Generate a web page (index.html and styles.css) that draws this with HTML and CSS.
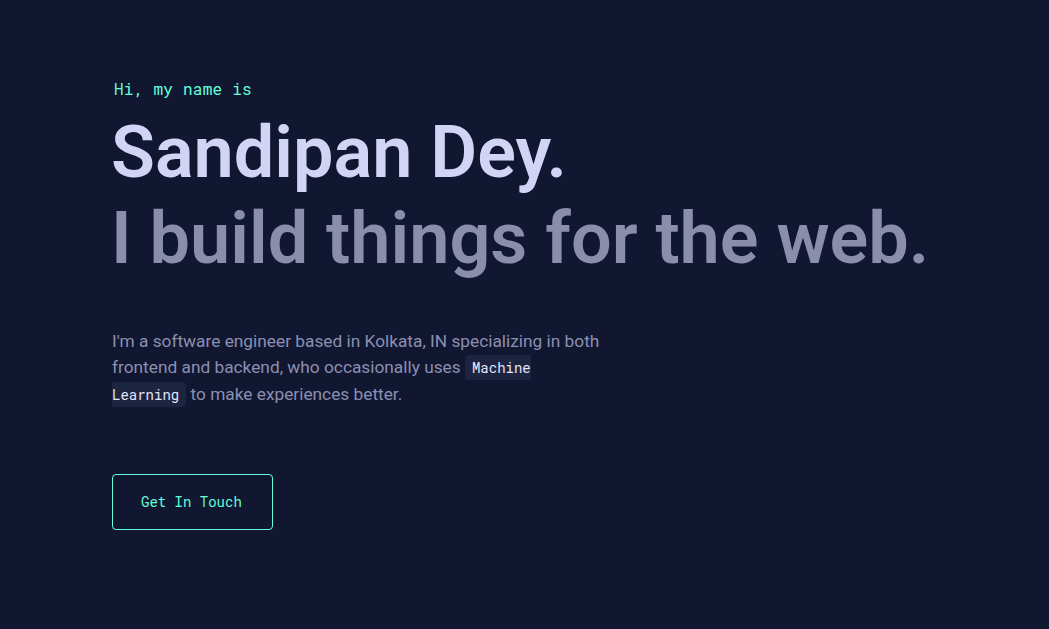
FILE: index.html
```html
<!DOCTYPE html>
<html lang="en">
<head>
<meta charset="utf-8">
<title>Sandipan Dey</title>
<link rel="stylesheet" href="styles.css">
</head>
<body>
<main class="hero">
  <p class="intro">Hi, my name is</p>
  <h1 class="name">Sandipan Dey.</h1>
  <h2 class="tagline">I build things for the web.</h2>
  <p class="bio">I'm a software engineer based in Kolkata, IN specializing in both frontend and backend, who occasionally uses <code class="chip">Machine Learning</code> to make experiences better.</p>
  <a class="cta" href="#contact">Get In Touch</a>
</main>
</body>
</html>
```
FILE: styles.css
```css
html, body {
  margin: 0;
  padding: 0;
  background: #111730;
}
body {
  min-height: 629px;
  font-family: Roboto, "Liberation Sans", sans-serif;
}
.hero {
  display: flex;
  flex-direction: column;
  align-items: flex-start;
  padding: 79px 0 0 112px;
}
.intro {
  margin: 0 0 14px 2px;
  font-family: "Roboto Mono", "DejaVu Sans Mono", monospace;
  font-size: 16px;
  line-height: 20px;
  letter-spacing: 0.25px;
  color: #64ffda;
}
.name,
.tagline {
  margin: 0 0 0 -1px;
  font-size: 72px;
  font-weight: 600;
  line-height: 80px;
}
.name {
  color: #d2d4f5;
}
.tagline {
  margin-top: 6px;
  color: #8a8dab;
}
.bio {
  margin: 49px 0 0;
  max-width: 495px;
  font-size: 17.3px;
  line-height: 26px;
  color: #8b8fb1;
}
.chip {
  font-family: "Roboto Mono", "DejaVu Sans Mono", monospace;
  font-size: 14px;
  padding: 3px 7px;
  border-radius: 4px;
  background: #1d2440;
  color: #e2e6fb;
}
.cta {
  margin-top: 66px;
  padding: 20px 30px 20px 28px;
  border: 1px solid #64ffda;
  border-radius: 4px;
  font-family: "Roboto Mono", "DejaVu Sans Mono", monospace;
  font-size: 14px;
  line-height: 14px;
  color: #64ffda;
  text-decoration: none;
}
```
